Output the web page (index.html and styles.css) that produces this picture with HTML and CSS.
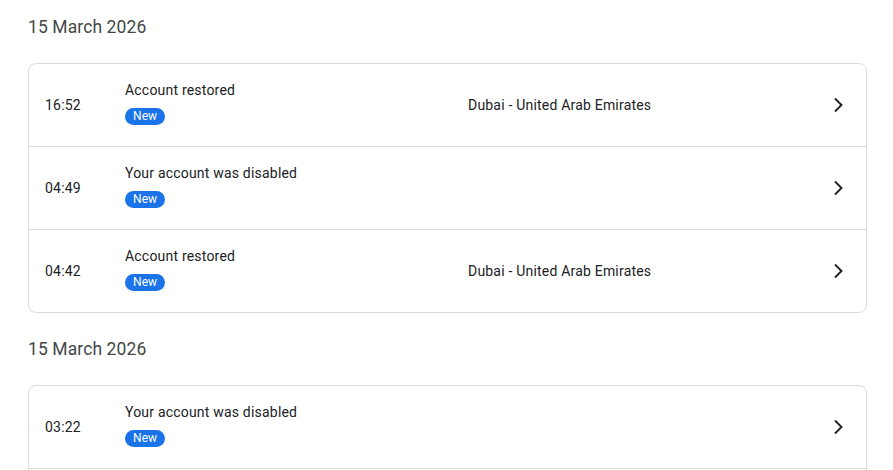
FILE: index.html
```html
<!DOCTYPE html>
<html lang="en">
<head>
<meta charset="utf-8">
<title>Activity</title>
<link rel="stylesheet" href="styles.css">
</head>
<body>
<div class="page">
  <section class="group">
    <h2 class="date">15 March 2026</h2>
    <div class="card">
      <div class="row">
        <div class="time">16:52</div>
        <div class="main"><div class="title">Account restored</div><span class="badge">New</span></div>
        <div class="loc">Dubai - United Arab Emirates</div>
        <svg class="chev" viewBox="0 0 24 24" width="24" height="24"><path d="M9 5.5l6.5 6.5-6.5 6.5"/></svg>
      </div>
      <div class="row">
        <div class="time">04:49</div>
        <div class="main"><div class="title">Your account was disabled</div><span class="badge">New</span></div>
        <div class="loc"></div>
        <svg class="chev" viewBox="0 0 24 24" width="24" height="24"><path d="M9 5.5l6.5 6.5-6.5 6.5"/></svg>
      </div>
      <div class="row">
        <div class="time">04:42</div>
        <div class="main"><div class="title">Account restored</div><span class="badge">New</span></div>
        <div class="loc">Dubai - United Arab Emirates</div>
        <svg class="chev" viewBox="0 0 24 24" width="24" height="24"><path d="M9 5.5l6.5 6.5-6.5 6.5"/></svg>
      </div>
    </div>
  </section>
  <section class="group">
    <h2 class="date">15 March 2026</h2>
    <div class="card card-open">
      <div class="row">
        <div class="time">03:22</div>
        <div class="main"><div class="title">Your account was disabled</div><span class="badge">New</span></div>
        <div class="loc"></div>
        <svg class="chev" viewBox="0 0 24 24" width="24" height="24"><path d="M9 5.5l6.5 6.5-6.5 6.5"/></svg>
      </div>
      <div class="row row-more"></div>
    </div>
  </section>
</div>
</body>
</html>
```
FILE: styles.css
```css
html, body {
  margin: 0;
  padding: 0;
  background: #ffffff;
}
body {
  font-family: Roboto, "Noto Sans", Arial, sans-serif;
  color: #202124;
  overflow: hidden;
  height: 470px;
}
.page {
  padding: 15px 26px 0 28px;
}
.group {
  margin-bottom: 24px;
}
.date {
  margin: 0 0 24px 0;
  font-size: 17.5px;
  line-height: 24px;
  font-weight: 400;
  color: #444746;
  letter-spacing: 0.1px;
}
.card {
  border: 1px solid #dadce0;
  border-radius: 8px;
}
.row {
  display: flex;
  align-items: center;
  height: 82px;
  padding: 0 16px;
  border-bottom: 1px solid #dadce0;
  letter-spacing: 0.2px;
}
.row:last-child {
  border-bottom: none;
}
.time {
  width: 80px;
  font-size: 14px;
  line-height: 20px;
  flex: none;
}
.main {
  width: 343px;
  flex: none;
  padding-bottom: 5px;
}
.title {
  font-size: 14px;
  line-height: 20px;
  margin-bottom: 5px;
}
.badge {
  display: inline-block;
  height: 17px;
  line-height: 17px;
  padding: 0 8px;
  border-radius: 9px;
  background: #1a73e8;
  color: #ffffff;
  font-size: 12px;
  letter-spacing: 0.1px;
}
.loc {
  flex: 1;
  font-size: 14px;
  line-height: 20px;
}
.chev {
  flex: none;
  fill: none;
  stroke: #202124;
  stroke-width: 1.9;
}
```
